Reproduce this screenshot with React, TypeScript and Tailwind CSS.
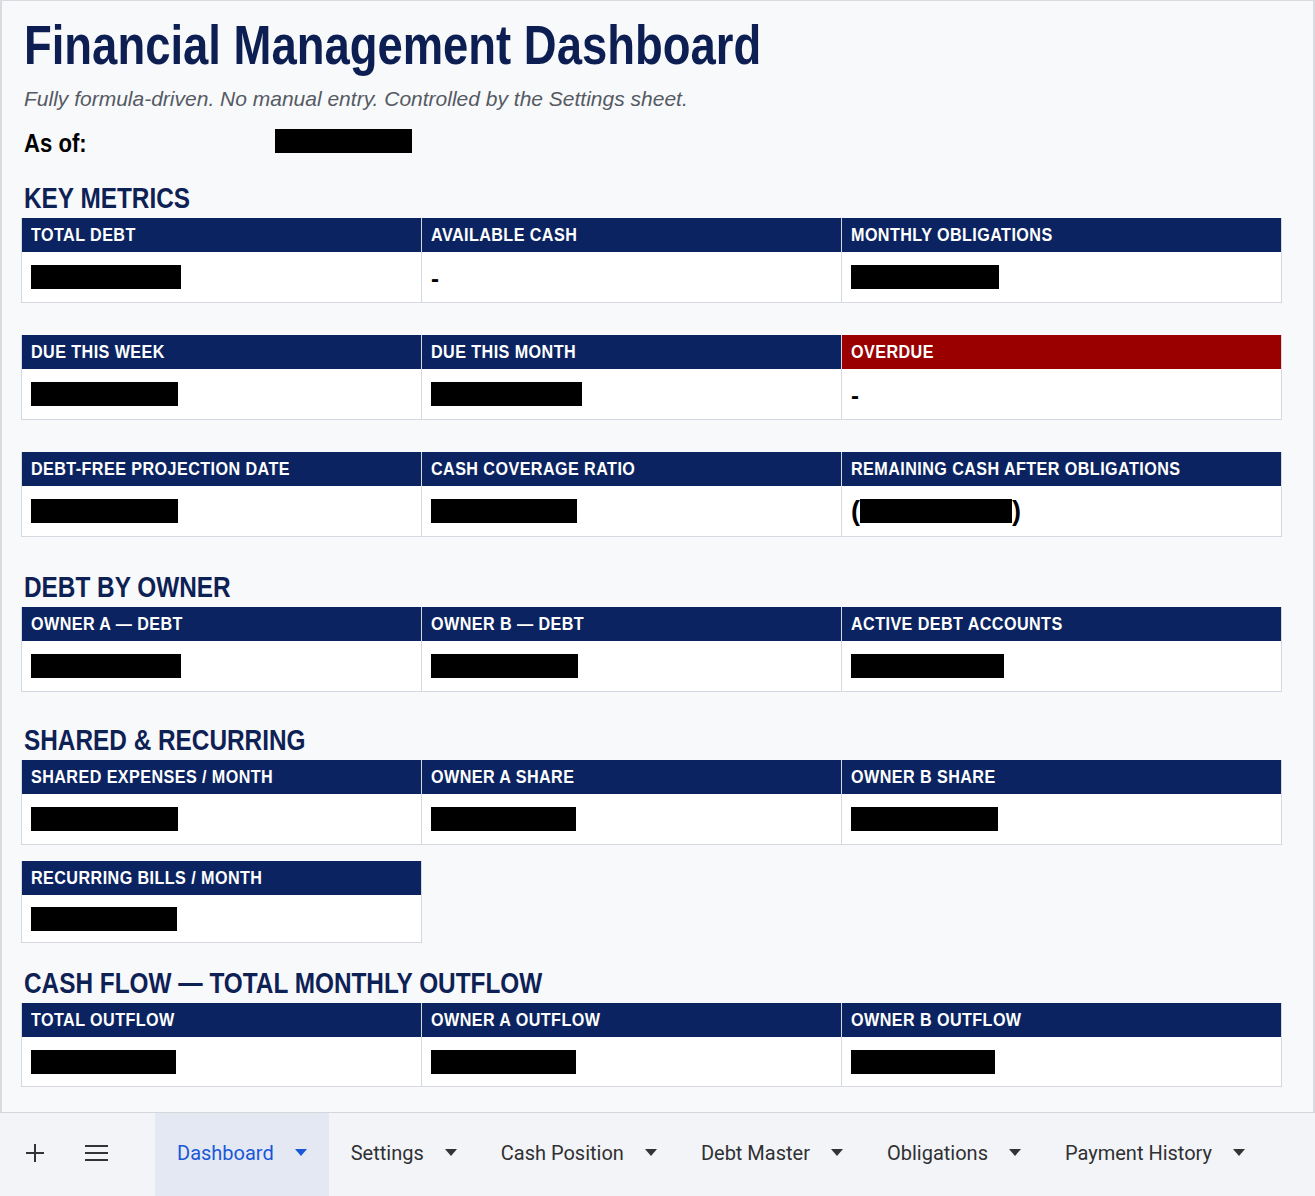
import React from "react";

type Metric = {
  label: string;
  bar?: number;
  dash?: boolean;
  paren?: boolean;
  red?: boolean;
};

const SANS = "font-['Liberation_Sans',Arial,sans-serif]";

function Bar({ w }: { w: number }) {
  return <div className="h-[24px] bg-black" style={{ width: w }} />;
}

function MetricRow({ items, bodyH = "h-[50px]", cols = "grid-cols-[400px_420px_441px]" }: { items: Metric[]; bodyH?: string; cols?: string }) {
  return (
    <div className={`grid ${cols}`}>
      {items.map((m, i) => (
        <div
          key={m.label}
          className={`flex flex-col border-l border-b border-[#d5d8de] ${i === items.length - 1 ? "border-r" : ""}`}
        >
          <div
            className={`flex h-[34px] items-center px-[9px] text-[19px] font-bold tracking-[0.5px] text-white ${SANS} ${
              m.red ? "bg-[#9a0000]" : "bg-[#0b2461]"
            }`}
          >
            <span className="inline-block origin-left scale-x-[0.85] whitespace-nowrap">{m.label}</span>
          </div>
          <div className={`flex ${bodyH} items-center bg-white px-[9px]`}>
            {m.dash && <span className={`mt-[4px] text-[24px] font-bold text-black ${SANS}`}>-</span>}
            {m.bar && !m.paren && <Bar w={m.bar} />}
            {m.paren && m.bar && (
              <div className={`flex items-center text-[27px] font-bold leading-none text-black ${SANS}`}>
                <span>(</span>
                <Bar w={m.bar} />
                <span>)</span>
              </div>
            )}
          </div>
        </div>
      ))}
    </div>
  );
}

function Heading({ children }: { children: React.ReactNode }) {
  return (
    <h2 className={`mb-[5px] pl-[3px] text-[29px] font-bold leading-[30px] text-[#0e2155] ${SANS}`}>
      <span className="inline-block origin-left scale-x-[0.84] whitespace-nowrap">{children}</span>
    </h2>
  );
}

function Caret({ color }: { color: string }) {
  return (
    <svg width="12" height="7" viewBox="0 0 12 7">
      <polygon points="0,0 12,0 6,7" fill={color} />
    </svg>
  );
}

const tabs = ["Dashboard", "Settings", "Cash Position", "Debt Master", "Obligations", "Payment History"];

export default function App() {
  return (
    <div className="flex h-[1196px] w-[1315px] flex-col overflow-hidden bg-[#f8f9fb]">
      <div className="flex-1 border-x-2 border-t border-[#d9dbe0] pl-[19px]">
        <h1 className={`mt-[17px] pl-[3px] text-[55px] font-bold leading-[55px] text-[#0d1f52] ${SANS}`}>
          <span className="inline-block origin-left scale-x-[0.826] whitespace-nowrap">Financial Management Dashboard</span>
        </h1>
        <p className={`mt-[15px] pl-[3px] text-[21px] italic leading-[21px] text-[#555a63] ${SANS}`}>
          Fully formula-driven. No manual entry. Controlled by the Settings sheet.
        </p>
        <div className="mt-[21px] flex items-start pl-[3px]">
          <span className={`w-[251px] text-[26px] font-bold leading-[26px] text-black ${SANS}`}>
            <span className="inline-block origin-left scale-x-[0.85]">As of:</span>
          </span>
          <div className="mt-[-1px] h-[24px] w-[137px] bg-black" />
        </div>

        <div className="mt-[27px]">
          <Heading>KEY METRICS</Heading>
          <MetricRow
            items={[
              { label: "TOTAL DEBT", bar: 150 },
              { label: "AVAILABLE CASH", dash: true },
              { label: "MONTHLY OBLIGATIONS", bar: 148 },
            ]}
          />
          <div className="mt-[32px]">
            <MetricRow
              items={[
                { label: "DUE THIS WEEK", bar: 147 },
                { label: "DUE THIS MONTH", bar: 151 },
                { label: "OVERDUE", dash: true, red: true },
              ]}
            />
          </div>
          <div className="mt-[32px]">
            <MetricRow
              items={[
                { label: "DEBT-FREE PROJECTION DATE", bar: 147 },
                { label: "CASH COVERAGE RATIO", bar: 146 },
                { label: "REMAINING CASH AFTER OBLIGATIONS", bar: 152, paren: true },
              ]}
            />
          </div>
        </div>

        <div className="mt-[35px]">
          <Heading>DEBT BY OWNER</Heading>
          <MetricRow
            items={[
              { label: "OWNER A — DEBT", bar: 150 },
              { label: "OWNER B — DEBT", bar: 147 },
              { label: "ACTIVE DEBT ACCOUNTS", bar: 153 },
            ]}
          />
        </div>

        <div className="mt-[33px]">
          <Heading>SHARED &amp; RECURRING</Heading>
          <MetricRow
            items={[
              { label: "SHARED EXPENSES / MONTH", bar: 147 },
              { label: "OWNER A SHARE", bar: 145 },
              { label: "OWNER B SHARE", bar: 147 },
            ]}
          />
          <div className="mt-[16px]">
            <MetricRow
              cols="grid-cols-[401px]"
              bodyH="h-[47px]"
              items={[{ label: "RECURRING BILLS / MONTH", bar: 146 }]}
            />
          </div>
        </div>

        <div className="mt-[25px]">
          <Heading>CASH FLOW — TOTAL MONTHLY OUTFLOW</Heading>
          <MetricRow
            bodyH="h-[49px]"
            items={[
              { label: "TOTAL OUTFLOW", bar: 145 },
              { label: "OWNER A OUTFLOW", bar: 145 },
              { label: "OWNER B OUTFLOW", bar: 144 },
            ]}
          />
        </div>
      </div>

      <div className="flex h-[84px] items-stretch border-t border-[#d3d6db] bg-[#f3f4f7] pb-[4px] font-['Roboto',sans-serif] text-[20px] text-[#2f3033]">
        <div className="flex w-[155px] items-center">
          <svg className="ml-[25px]" width="20" height="20" viewBox="0 0 20 20">
            <path d="M10 1v18M1 10h18" stroke="#333" strokeWidth="2" />
          </svg>
          <svg className="ml-[40px]" width="23" height="18" viewBox="0 0 23 18">
            <path d="M0 2h23M0 9h23M0 16h23" stroke="#333" strokeWidth="2" />
          </svg>
        </div>
        {tabs.map((t, i) => (
          <div
            key={t}
            className={`-mb-[4px] flex items-center gap-[21px] px-[22px] pb-[4px] ${i === 0 ? "bg-[#e3e8f3] text-[#1a57d6]" : ""}`}
          >
            <span>{t}</span>
            <Caret color={i === 0 ? "#1a57d6" : "#333"} />
          </div>
        ))}
      </div>
    </div>
  );
}
